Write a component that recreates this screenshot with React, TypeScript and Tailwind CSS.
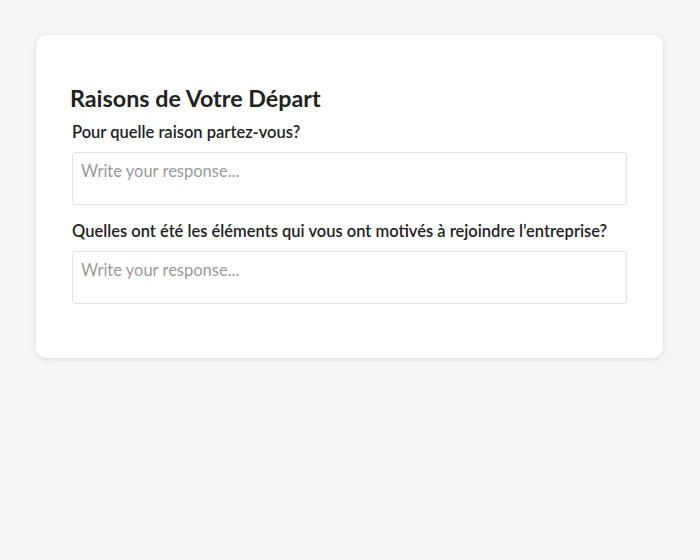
export default function App() {
  return (
    <div className="min-h-screen bg-[#f7f7f7] pt-[35px] font-['Lato',sans-serif]">
      <div className="ml-[36px] w-[627px] rounded-[10px] bg-white px-9 pt-[48px] pb-[54px] shadow-[0_1px_6px_rgba(0,0,0,0.12)]">
        <h1 className="-ml-[2px] text-[23.3px] leading-[30px] font-bold text-[#222]">
          Raisons de Votre Départ
        </h1>
        <div className="mt-[7px] flex flex-col">
          <label className="text-[16.5px] leading-[24px] font-semibold text-[#222]">
            Pour quelle raison partez-vous?
          </label>
          <textarea
            rows={2}
            placeholder="Write your response..."
            className="mt-[8px] h-[53px] w-full resize-none rounded-[3px] border border-[#e2e2e2] px-[8px] pt-[7px] pb-[6px] text-[16.5px] leading-[22px] text-[#333] placeholder:text-[#9a9a9a] outline-none"
          />
          <label className="mt-[14px] text-[16.5px] leading-[24px] font-semibold text-[#222]">
            Quelles ont été les éléments qui vous ont motivés à rejoindre l’entreprise?
          </label>
          <textarea
            rows={2}
            placeholder="Write your response..."
            className="mt-[8px] h-[53px] w-full resize-none rounded-[3px] border border-[#e2e2e2] px-[8px] pt-[7px] pb-[6px] text-[16.5px] leading-[22px] text-[#333] placeholder:text-[#9a9a9a] outline-none"
          />
        </div>
      </div>
    </div>
  );
}
